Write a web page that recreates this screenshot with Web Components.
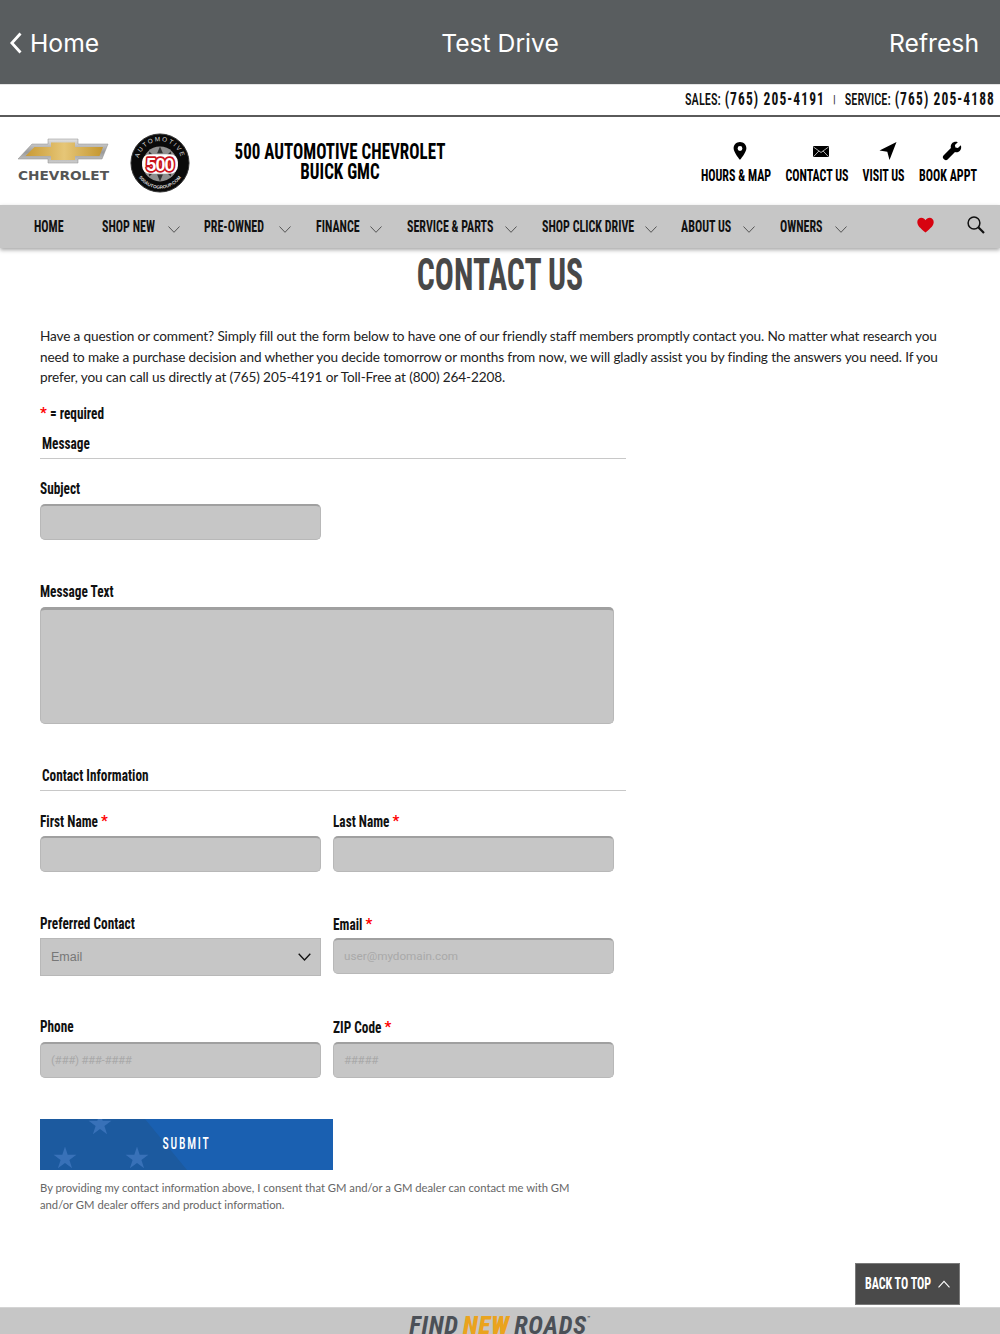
<!DOCTYPE html>
<html>
<head>
<meta charset="utf-8">
<title>Contact Us</title>
<style>
    html, body { margin: 0; height: 1334px; overflow: hidden; background: #fff; }
    body { position: relative; --cond: "Liberation Sans Narrow", "Roboto Condensed", "Liberation Sans", sans-serif; }
</style>
</head>
<body>
<app-bar></app-bar>
<phone-strip></phone-strip>
<site-header></site-header>
<nav-bar>
    <nav-item style="--w:30px;margin-left:34px;margin-right:38px" plain>HOME</nav-item>
    <nav-item style="--w:54px;margin-right:24px">SHOP NEW</nav-item>
    <nav-item style="--w:63px">PRE-OWNED</nav-item>
    <nav-item style="--w:42px">FINANCE</nav-item>
    <nav-item style="--w:86px">SERVICE &amp; PARTS</nav-item>
    <nav-item style="--w:91px;margin-right:24px">SHOP CLICK DRIVE</nav-item>
    <nav-item style="--w:50px">ABOUT US</nav-item>
    <nav-item style="--w:43px">OWNERS</nav-item>
</nav-bar>
<contact-page>
    <form-section title="Message">
        <form-field label="Subject"></form-field>
        <form-field label="Message Text" type="area" style="margin-top:39px"></form-field>
    </form-section>
    <form-section title="Contact Information" style="margin-top:39px">
        <form-row>
            <form-field label="First Name" required></form-field>
            <form-field label="Last Name" required></form-field>
        </form-row>
        <form-row style="margin-top:39px">
            <form-field label="Preferred Contact" type="select" value="Email" style="--lift:-1px"></form-field>
            <form-field label="Email" required placeholder="user@mydomain.com" style="--lift:-1px"></form-field>
        </form-row>
        <form-row style="margin-top:38px;--ph-ls:-.4px">
            <form-field label="Phone" placeholder="(###) ###-####"></form-field>
            <form-field label="ZIP Code" required placeholder="#####"></form-field>
        </form-row>
    </form-section>
    <submit-button>SUBMIT</submit-button>
    <p slot="consent">By providing my contact information above, I consent that GM and/or a GM dealer can contact me with GM and/or GM dealer offers and product information.</p>
</contact-page>
<back-to-top></back-to-top>
<site-footer></site-footer>

<script>
// the condensed headline face isn't installed: small bold text, stretched up
class NarrowText extends HTMLElement {
    constructor() {
        super();
        this.attachShadow({ mode: 'open' });
        this.shadowRoot.innerHTML = `
            <style>
                :host {
                    display: inline-block;
                    transform: scaleY(var(--sy, 1.34));
                    white-space: nowrap;
                }
            </style>
            <slot></slot>
        `;
    }
}

class AppBar extends HTMLElement {
    constructor() {
        super();
        this.attachShadow({ mode: 'open' });
        this.shadowRoot.innerHTML = `
            <style>
                :host {
                    display: grid;
                    grid-template-columns: 1fr auto 1fr;
                    align-items: center;
                    height: 84px;
                    padding: 1px 10px 0;
                    box-sizing: border-box;
                    background: #595d5f;
                    color: #fff;
                    font: 400 24.700px Inter, Roboto, sans-serif;
                }
                .back { display: flex; align-items: center; gap: 8px; }
                .refresh { text-align: right; margin-right: 11px; }
                svg { display: block; }
            </style>
            <div class="back">
                <svg width="12" height="22" viewBox="0 0 12 22"><path d="M10.500 1.500 1.800 11l8.700 9.500" fill="none" stroke="#fff" stroke-width="2.800"/></svg>
                <span>Home</span>
            </div>
            <div class="title">Test Drive</div>
            <div class="refresh">Refresh</div>
        `;
    }
}

class PhoneStrip extends HTMLElement {
    constructor() {
        super();
        this.attachShadow({ mode: 'open' });
        this.shadowRoot.innerHTML = `
            <style>
                :host {
                    display: flex;
                    justify-content: flex-end;
                    align-items: center;
                    height: 33px;
                    box-sizing: border-box;
                    padding: 0 5px 4px 0;
                    border-top: 1px solid #e4e4e4;
                    border-bottom: 2px solid #5a5a5a;
                    background: #fff;
                    color: #111;
                    font: 500 12.400px var(--cond);
                }
                b { font-size: 13.500px; letter-spacing: 1.100px; margin-left: 4px; }
                i { font-style: normal; font-size: 11px; margin: 2px 9px 0 8px; color: #333; }
            </style>
            <narrow-text>SALES:</narrow-text><b><narrow-text>(765) 205-4191</narrow-text></b>
            <i>|</i>
            <narrow-text>SERVICE:</narrow-text><b><narrow-text>(765) 205-4188</narrow-text></b>
        `;
    }
}

class SiteHeader extends HTMLElement {
    constructor() {
        super();
        this.attachShadow({ mode: 'open' });
        this.shadowRoot.innerHTML = `
            <style>
                :host {
                    display: flex;
                    height: 88px;
                    background: #fff;
                    color: #000;
                    font-family: var(--cond);
                }
                .chevy { margin: 21px 0 0 18px; width: 92px; height: 46px; flex: none; }
                .five { margin: 16px 0 0 20px; width: 60px; height: 60px; flex: none; }
                .name {
                    width: 290px;
                    margin: 24px 0 0 5px;
                    text-align: center;
                    font: 700 17px/20px var(--cond);
                    --sy: 1.3;
                }
                .links { display: flex; margin: 24px 0 0 215px; gap: 14px; }
                .link { display: flex; flex-direction: column; align-items: center; font: 700 12px/18px var(--cond); white-space: nowrap; }
                .link svg { height: 20px; margin: 0 0 6px 8px; display: block; }
            </style>
            <svg class="chevy" viewBox="0 0 92 46">
                <defs>
                    <linearGradient id="sil" x1="0" y1="0" x2="0" y2="1">
                        <stop offset="0" stop-color="#e4e4e4"/><stop offset=".55" stop-color="#9a9a9a"/><stop offset="1" stop-color="#cfcfcf"/>
                    </linearGradient>
                    <linearGradient id="gold" x1="0" y1="0" x2="1" y2="0">
                        <stop offset="0" stop-color="#c99a34"/><stop offset=".5" stop-color="#e6c677"/><stop offset="1" stop-color="#c4962f"/>
                    </linearGradient>
                </defs>
                <path d="M14 6H30V1H60V6H90L84 21H60V25H30V21H0Z" fill="url(#sil)" stroke="#8a8a8a" stroke-width=".5"/>
                <path d="M16.500 9H33V4.500H57V9H85L81.500 18H57V22H33V18H7.500Z" fill="url(#gold)"/>
                <text x="0" y="41.500" textLength="91" lengthAdjust="spacingAndGlyphs" font-family="DejaVu Sans" font-weight="700" font-size="11.500" fill="#555">CHEVROLET</text>
            </svg>
            <svg class="five" viewBox="0 0 62 62">
                <defs><path id="tp" d="M8.500 31a22.500 22.500 0 0 1 45 0"/><path id="bp" d="M4.500 31a26.500 26.500 0 0 0 53 0"/></defs>
                <circle cx="31" cy="31" r="30" fill="#0a0a0a" stroke="#333"/>
                <text font-family="Liberation Sans" font-size="6.500" fill="#ddd" letter-spacing="1.700"><textPath href="#tp" startOffset="50%" text-anchor="middle">AUTOMOTIVE</textPath></text>
                <text font-family="Liberation Sans" font-size="4.800" fill="#ddd" font-weight="700"><textPath href="#bp" startOffset="50%" text-anchor="middle">500AUTOGROUP.COM</textPath></text>
                <circle cx="31" cy="32" r="18" fill="#8f8f8f"/>
                <path d="M20 19l5 5-7 3zM42 19l-5 5 7 3zM20 45l5-5-7-3zM42 45l-5-5 7-3zM31 14l3 7h-6zM31 50l3-7h-6z" fill="#333"/>
                <rect x="12.500" y="22" width="37" height="20" rx="8" fill="#fff"/>
                <text x="31" y="39" text-anchor="middle" font-family="Liberation Sans" font-weight="700" font-size="18.500" letter-spacing="-.8" stroke-linejoin="round" fill="#fff" stroke="#c9121b" stroke-width="3.400" paint-order="stroke">500</text>
            </svg>
            <div class="name"><narrow-text>500 AUTOMOTIVE CHEVROLET</narrow-text><br><narrow-text>BUICK GMC</narrow-text></div>
            <div class="links">
                <div class="link" style="width:72px">
                    <svg width="14" viewBox="0 0 14 20"><path fill-rule="evenodd" d="M7 1C3.300 1 .6 3.800.6 7.300.6 11.500 7 19 7 19s6.400-7.500 6.400-11.700C13.400 3.800 10.700 1 7 1Zm0 4.100a2.400 2.400 0 1 1 0 4.800 2.400 2.400 0 0 1 0-4.800Z"/></svg>
                    <narrow-text>HOURS &amp; MAP</narrow-text>
                </div>
                <div class="link" style="width:62px">
                    <svg width="16" viewBox="0 0 16 20"><rect y="5" width="16" height="11" rx=".8"/><path d="M.5 6 8 11.500 15.500 6M.7 15.500l5.300-5.600M15.300 15.500 10 9.900" fill="none" stroke="#fff" stroke-width=".7"/></svg>
                    <narrow-text>CONTACT US</narrow-text>
                </div>
                <div class="link" style="width:43px">
                    <svg width="18" viewBox="0 0 18 20"><path d="M17.500 1 .5 9.500l7.800 1.300 2.200 8.200Z"/></svg>
                    <narrow-text>VISIT US</narrow-text>
                </div>
                <div class="link" style="width:56px;margin-left:1px">
                    <svg width="20" viewBox="0 0 20 20"><path d="M18.800 4.300 15.900 7.100 13.400 6.600 12.900 4.100 15.800 1.200C13.800.4 11.500.8 10.100 2.300 8.900 3.500 8.400 5.300 8.900 7L1.500 14.400C.6 15.300.6 16.800 1.500 17.700L2.300 18.500C3.200 19.400 4.700 19.400 5.600 18.500L13 11.100C14.700 11.600 16.500 11.100 17.700 9.900 19.200 8.500 19.600 6.200 18.800 4.300Z"/></svg>
                    <narrow-text>BOOK APPT</narrow-text>
                </div>
            </div>
        `;
    }
}

class NavBar extends HTMLElement {
    constructor() {
        super();
        this.attachShadow({ mode: 'open' });
        this.shadowRoot.innerHTML = `
            <style>
                :host {
                    display: flex;
                    align-items: center;
                    height: 43px;
                    position: relative;
                    z-index: 2;
                    background: #c6c6c6;
                    box-shadow: 0 2px 4px rgba(0,0,0,.35);
                }
                .tools { display: flex; gap: 33px; margin-left: 45px; margin-bottom: 3px; align-items: center; }
            </style>
            <slot></slot>
            <div class="tools">
                <svg width="17" height="16" viewBox="0 0 17 16"><path d="M8.500 15.500C3 11 .3 8.500.3 5 .3 2.500 2.200.8 4.400.8 6.100.8 7.700 1.800 8.500 3.300 9.300 1.800 10.900.8 12.600.8 14.800.8 16.700 2.500 16.700 5 16.700 8.500 14 11 8.500 15.500Z" fill="#d70310"/></svg>
                <svg width="18" height="18" viewBox="0 0 18 18"><circle cx="7" cy="7" r="5.900" fill="none" stroke="#111" stroke-width="1.500"/><path d="M11.300 11.300 17 17" stroke="#111" stroke-width="2.200"/></svg>
            </div>
        `;
    }
}

class NavItem extends HTMLElement {
    constructor() {
        super();
        this.attachShadow({ mode: 'open' });
        const chev = this.hasAttribute('plain') ? '' : `
            <svg width="12" height="7" viewBox="0 0 12 7"><path d="M.5.5 6 6.300 11.500.5" fill="none" stroke="#555" stroke-width="1"/></svg>`;
        this.shadowRoot.innerHTML = `
            <style>
                :host {
                    display: flex;
                    align-items: center;
                    gap: 12px;
                    margin-right: 25px;
                    color: #111;
                    font: 700 12px var(--cond);
                    white-space: nowrap;
                }
                span { width: var(--w); display: block; margin-bottom: 2px; }
                svg { margin-top: 5px; }
            </style>
            <span><narrow-text style="--sy:1.38"><slot></slot></narrow-text></span>${chev}
        `;
    }
}

class ContactPage extends HTMLElement {
    constructor() {
        super();
        this.attachShadow({ mode: 'open' });
        this.shadowRoot.innerHTML = `
            <style>
                :host { display: block; padding: 0 40px; color: #222; }
                h1 {
                    margin: 5px 0 0;
                    height: 45px;
                    text-align: center;
                    color: #484848;
                    font: 700 31.700px/46px var(--cond);
                    --sy: 1.38;
                }
                p {
                    margin: 28px 0 0;
                    width: 905px;
                    font: 400 13.600px/20.500px Lato, "Open Sans", sans-serif;
                    letter-spacing: -.13px;
                    color: #222;
                }
                .req { margin: 13px 0 0; height: 23px; font: 700 13.300px/24px var(--cond); color: #111; --sy: 1.3; }
                .req i { font-style: normal; color: #f00; font-size: 15px; }
                ::slotted(p) {
                    width: 535px;
                    margin: 9px 0 0;
                    color: #666;
                    font: 400 11.250px/17.500px Lato, "Open Sans", sans-serif;
                }
            </style>
            <h1><narrow-text>CONTACT US</narrow-text></h1>
            <p>Have a question or comment? Simply fill out the form below to have one of our friendly staff members promptly contact you. No matter what research you need to make a purchase decision and whether you decide tomorrow or months from now, we will gladly assist you by finding the answers you need. If you prefer, you can call us directly at (765) 205-4191 or Toll-Free at (800) 264-2208.</p>
            <div class="req"><i>*</i> <narrow-text>= required</narrow-text></div>
            <slot></slot>
            <slot name="consent"></slot>
        `;
    }
}

class FormSection extends HTMLElement {
    constructor() {
        super();
        this.attachShadow({ mode: 'open' });
        this.shadowRoot.innerHTML = `
            <style>
                :host { display: block; width: 586px; margin-top: 7px; }
                h2 {
                    margin: 0 0 17px;
                    padding: 1px 0 2px 2px;
                    height: 24px;
                    border-bottom: 1px solid #c8c8c8;
                    color: #111;
                    font: 700 13.300px/24px var(--cond);
                    --sy: 1.3;
                }
            </style>
            <h2><narrow-text>${this.getAttribute('title')}</narrow-text></h2>
            <slot></slot>
        `;
    }
}

class FormRow extends HTMLElement {
    constructor() {
        super();
        this.attachShadow({ mode: 'open' });
        this.shadowRoot.innerHTML = `
            <style>:host { display: grid; grid-template-columns: 293px 293px; }</style>
            <slot></slot>
        `;
    }
}

class FormField extends HTMLElement {
    constructor() {
        super();
        this.attachShadow({ mode: 'open' });
        const type = this.getAttribute('type');
        const ph = this.getAttribute('placeholder') || '';
        let box = `<input placeholder="${ph}">`;
        if (type === 'area') box = '<textarea></textarea>';
        if (type === 'select') box = `
            <div class="select">${this.getAttribute('value')}
                <svg width="13" height="8" viewBox="0 0 13 8"><path d="M.7.7 6.500 7 12.300.7" fill="none" stroke="#111" stroke-width="1.300"/></svg>
            </div>`;
        const star = this.hasAttribute('required') ? ' <i>*</i>' : '';
        this.shadowRoot.innerHTML = `
            <style>
                :host { display: block; }
                label { display: block; height: 24px; padding-top: 1px; box-sizing: border-box; margin-bottom: calc(4px + var(--lift, 0px)); color: #111; font: 700 13.300px/24px var(--cond); --sy: 1.3; }
                i { font-style: normal; color: #f00; font-size: 15px; }
                input, textarea, .select {
                    display: block;
                    box-sizing: border-box;
                    width: 281px;
                    height: 36px;
                    margin: 0;
                    padding: 0 10px;
                    background: #c6c6c6;
                    border: 1px solid #b8b8b8;
                    border-top: 2px solid #a0a0a0;
                    border-radius: 5px;
                    outline: 0;
                    font: 400 11.700px Roboto, sans-serif;
                    letter-spacing: var(--ph-ls, 0);
                    resize: none;
                }
                input::placeholder { color: #a9a9a9; opacity: 1; }
                textarea { width: 574px; height: 117px; border-top-width: 3px; }
                .select {
                    display: flex;
                    align-items: center;
                    justify-content: space-between;
                    height: 38px;
                    padding-right: 9px;
                    color: #777;
                    border-radius: 0;
                    border: 1px solid #b8b8b8;
                    font: 400 12.500px "Liberation Sans", sans-serif;
                }
            </style>
            <label><narrow-text>${this.getAttribute('label')}</narrow-text>${star}</label>
            ${box}
        `;
    }
}

class SubmitButton extends HTMLElement {
    constructor() {
        super();
        this.attachShadow({ mode: 'open' });
        this.shadowRoot.innerHTML = `
            <style>
                :host {
                    display: flex;
                    align-items: center;
                    justify-content: center;
                    position: relative;
                    overflow: hidden;
                    width: 293px;
                    height: 51px;
                    margin-top: 41px;
                    background: #1a60b1;
                    color: #fff;
                    font: 500 11.700px var(--cond);
                    letter-spacing: 1.800px;
                }
                svg { position: absolute; left: 0; top: 0; }
                span { position: relative; }
            </style>
            <svg width="293" height="51" viewBox="0 0 293 51">
                <path d="M0 0H105L147 51H0Z" fill="#1c5a9f"/>
                <path id="s1" fill="#3871b8" d="M60 -6.500l2.700 8.300h8.700l-7 5.100 2.700 8.300-7.100-5.100-7.100 5.100 2.700-8.300-7-5.100h8.700z"/>
                <use href="#s1" x="-35" y="34"/>
                <use href="#s1" x="37" y="34"/>
            </svg>
            <span><narrow-text><slot></slot></narrow-text></span>
        `;
    }
}

class BackToTop extends HTMLElement {
    constructor() {
        super();
        this.attachShadow({ mode: 'open' });
        this.shadowRoot.innerHTML = `
            <style>
                :host {
                    position: absolute;
                    left: 855px;
                    top: 1263px;
                    z-index: 3;
                    display: flex;
                    align-items: center;
                    justify-content: center;
                    gap: 7px;
                    width: 105px;
                    height: 42px;
                    box-sizing: border-box;
                    background: #4a4a4a;
                    border: 1px solid #7a7a7a;
                    color: #fff;
                    font: 700 12px var(--cond);
                }
            </style>
            <narrow-text>BACK TO TOP</narrow-text>
            <svg width="12" height="8" viewBox="0 0 12 8"><path d="M.5 7.300 6 1.300l5.500 6" fill="none" stroke="#fff" stroke-width="1.100"/></svg>
        `;
    }
}

class SiteFooter extends HTMLElement {
    constructor() {
        super();
        this.attachShadow({ mode: 'open' });
        this.shadowRoot.innerHTML = `
            <style>
                :host {
                    position: absolute;
                    left: 0;
                    right: 0;
                    top: 1307px;
                    height: 27px;
                    overflow: hidden;
                    background: #c6c6c6;
                    border-top: 1px solid #d4d4d4;
                    box-sizing: border-box;
                    text-align: center;
                    font: italic 700 25px/36px var(--cond);
                    word-spacing: -2px;
                    color: #4b5057;
                    letter-spacing: .7px;
                }
                b { color: #eaa31e; }
                sup { font-size: 6px; vertical-align: 14px; line-height: 0; }
            </style>
            FIND <b>NEW</b> ROADS<sup>™</sup>
        `;
    }
}

customElements.define('narrow-text', NarrowText);
customElements.define('app-bar', AppBar);
customElements.define('phone-strip', PhoneStrip);
customElements.define('site-header', SiteHeader);
customElements.define('nav-bar', NavBar);
customElements.define('nav-item', NavItem);
customElements.define('contact-page', ContactPage);
customElements.define('form-section', FormSection);
customElements.define('form-row', FormRow);
customElements.define('form-field', FormField);
customElements.define('submit-button', SubmitButton);
customElements.define('back-to-top', BackToTop);
customElements.define('site-footer', SiteFooter);
</script>
</body>
</html>
